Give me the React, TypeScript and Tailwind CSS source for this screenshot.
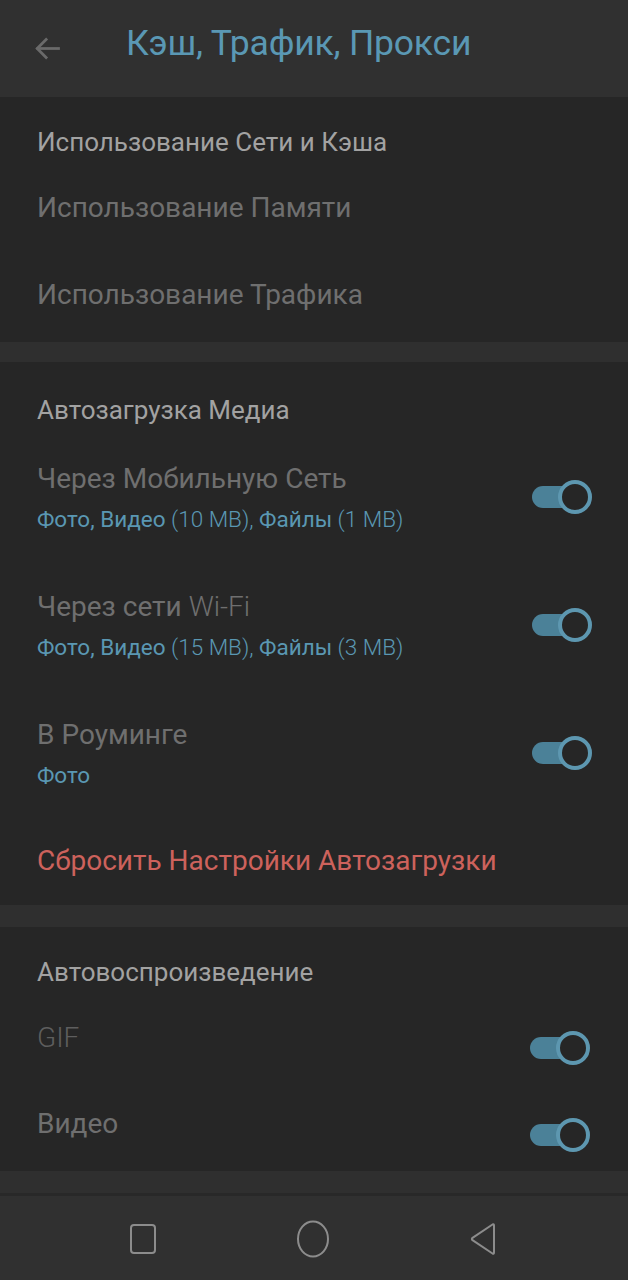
import React from "react";

// --- ICONS ---
const BackArrow = () => (
  <svg viewBox="0 0 24 24" fill="none" stroke="currentColor" strokeWidth="2" strokeLinecap="square" className="w-[33px] h-[33px]">
    <path d="M20 12H5" />
    <path d="M11 5.5L4.5 12l6.5 6.5" />
  </svg>
);

const Toggle = ({ className = "" }: { className?: string }) => (
  <div className={`relative w-[60px] h-[34px] shrink-0 ${className}`}>
    <div className="absolute left-0 top-[6px] w-[50px] h-[22px] rounded-full bg-[#4b8198]" />
    <div className="absolute right-0 top-0 w-[34px] h-[34px] rounded-full border-[4px] border-[#5d97b0] bg-[#262626]" />
  </div>
);

const SectionTitle = ({ children, h = "h-[44px]" }: { children: React.ReactNode; h?: string }) => (
  <div className={`${h} flex items-center px-[37px] text-[26px] text-[#a2a2a2]`}>{children}</div>
);

const Sub = ({ parts }: { parts: [string, boolean][] }) => (
  <div className="mt-[11px] leading-[26px] text-[22.5px] text-[#5a97b2] whitespace-nowrap">
    {parts.map(([t, strong], i) => (
      <span key={i} className={strong ? "font-normal" : "font-light"}>{t}</span>
    ))}
  </div>
);

const MediaRow = ({ title, parts }: { title: React.ReactNode; parts: [string, boolean][] }) => (
  <div className="h-[128px] flex items-center justify-between pl-[37px] pr-[36px]">
    <div className="flex flex-col">
      <div className="leading-[32px] text-[28px] text-[#6f6f6f]">{title}</div>
      <Sub parts={parts} />
    </div>
    <Toggle />
  </div>
);

export default function App() {
  return (
    <div className="w-[628px] h-[1280px] bg-[#2f2f2f] flex flex-col overflow-hidden" style={{ fontFamily: "Roboto, 'Noto Sans', sans-serif" }}>
      {/* header */}
      <header className="h-[97px] shrink-0 bg-[#303030] flex items-center">
        <div className="w-[126px] pl-[31px] text-[#6a6a6a] flex items-center">
          <BackArrow />
        </div>
        <h1 className="mb-[9px] text-[35.5px] text-[#5a98b4] tracking-[-0.2px]">Кэш, Трафик, Прокси</h1>
      </header>

      {/* network & cache */}
      <section className="bg-[#262626] pt-[23px] pb-[4px]">
        <SectionTitle>Использование Сети и Кэша</SectionTitle>
        <div className="h-[87px] flex items-center px-[37px] text-[28px] text-[#6f6f6f]">Использование Памяти</div>
        <div className="h-[87px] flex items-center px-[37px] text-[28px] text-[#6f6f6f]">Использование Трафика</div>
      </section>

      <div className="h-[20px] shrink-0" />

      {/* autodownload */}
      <section className="bg-[#262626] pt-[25px]">
        <SectionTitle h="h-[46px]">Автозагрузка Медиа</SectionTitle>
        <MediaRow
          title="Через Мобильную Сеть"
          parts={[["Фото, Видео", true], [" (10 MB), ", false], ["Файлы", true], [" (1 MB)", false]]}
        />
        <MediaRow
          title={<>Через сети <span className="font-light">Wi-Fi</span></>}
          parts={[["Фото, Видео", true], [" (15 MB), ", false], ["Файлы", true], [" (3 MB)", false]]}
        />
        <MediaRow title="В Роуминге" parts={[["Фото", true]]} />
        <div className="h-[88px] flex items-center px-[37px] text-[28px] text-[#cd625c]">Сбросить Настройки Автозагрузки</div>
      </section>

      <div className="h-[22px] shrink-0" />

      {/* autoplay */}
      <section className="bg-[#262626] pt-[22px] pb-[4px]">
        <SectionTitle h="h-[46px]">Автовоспроизведение</SectionTitle>
        <div className="h-[86px] flex items-center justify-between pl-[37px] pr-[38px]">
          <span className="text-[28px] text-[#5e5e5e] font-light">GIF</span>
          <Toggle className="mt-[20px]" />
        </div>
        <div className="h-[86px] flex items-center justify-between pl-[37px] pr-[38px]">
          <span className="text-[28px] text-[#6f6f6f]">Видео</span>
          <Toggle className="mt-[22px]" />
        </div>
      </section>

      <div className="h-[22px] shrink-0" />
      <div className="h-[3px] shrink-0 bg-[#282828]" />

      {/* system nav */}
      <nav className="flex-1 bg-[#303030] flex items-center justify-center gap-[137px] pt-[2px]">
        <svg viewBox="0 0 30 34" className="w-[30px] h-[34px]" fill="none" stroke="#8c8c8c" strokeWidth="2">
          <rect x="3" y="3" width="24" height="28" rx="3" />
        </svg>
        <svg viewBox="0 0 36 40" className="w-[36px] h-[40px]" fill="none" stroke="#8c8c8c" strokeWidth="2">
          <ellipse cx="18" cy="20" rx="15" ry="17.5" />
        </svg>
        <svg viewBox="0 0 32 38" className="w-[32px] h-[38px]" fill="none" stroke="#8c8c8c" strokeWidth="2" strokeLinejoin="round">
          <path d="M24.5 4.5 Q26 3.8 26 5.5 V32.5 Q26 34.2 24.5 33.5 L4.5 20.2 Q3.2 19 4.5 17.8 Z" />
        </svg>
      </nav>
    </div>
  );
}
